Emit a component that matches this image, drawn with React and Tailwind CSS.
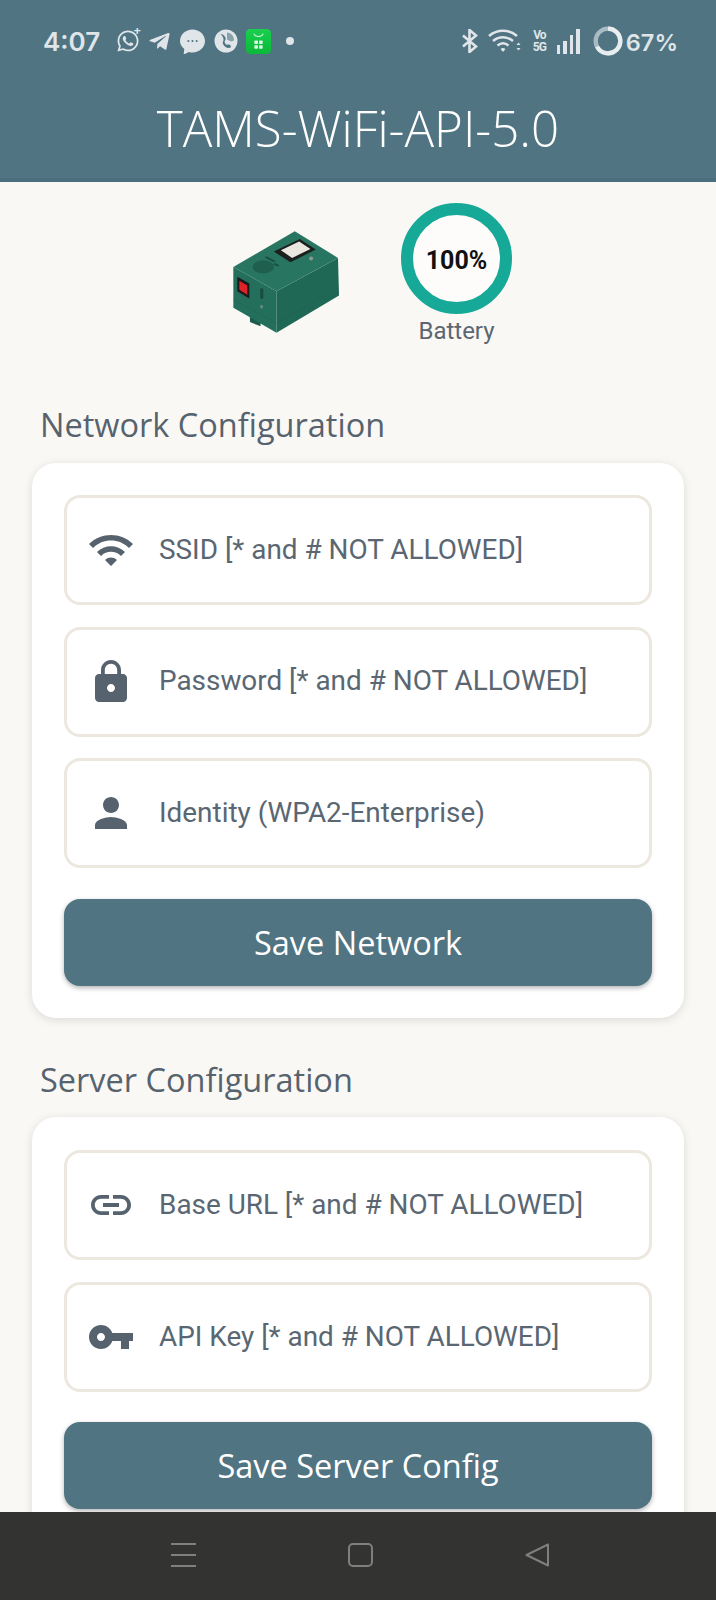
import React from 'react';
import { FaWhatsapp, FaTelegramPlane } from 'react-icons/fa';

const paths = {
  wifi: 'M1 9l2 2c4.97-4.97 13.03-4.97 18 0l2-2C16.93 2.93 7.08 2.93 1 9zm8 8l3 3 3-3c-1.65-1.66-4.34-1.66-6 0zm-4-4l2 2c2.76-2.76 7.24-2.76 10 0l2-2C15.14 9.14 8.87 9.14 5 13z',
  lock: 'M18 8h-1V6c0-2.76-2.24-5-5-5S7 3.24 7 6v2H6c-1.1 0-2 .9-2 2v10c0 1.1.9 2 2 2h12c1.1 0 2-.9 2-2V10c0-1.1-.9-2-2-2zm-6 9c-1.1 0-2-.9-2-2s.9-2 2-2 2 .9 2 2-.9 2-2 2zm3.1-9H8.9V6c0-1.71 1.39-3.1 3.1-3.1 1.71 0 3.1 1.39 3.1 3.1v2z',
  person: 'M12 12c2.21 0 4-1.79 4-4s-1.79-4-4-4-4 1.79-4 4 1.79 4 4 4zm0 2c-2.67 0-8 1.34-8 4v2h16v-2c0-2.66-5.33-4-8-4z',
  link: 'M3.9 12c0-1.71 1.39-3.1 3.1-3.1h4V7H7c-2.76 0-5 2.24-5 5s2.24 5 5 5h4v-1.9H7c-1.71 0-3.1-1.39-3.1-3.1zM8 13h8v-2H8v2zm9-6h-4v1.9h4c1.71 0 3.1 1.39 3.1 3.1s-1.39 3.1-3.1 3.1h-4V17h4c2.76 0 5-2.24 5-5s-2.24-5-5-5z',
  key: 'M12.65 10C11.83 7.67 9.61 6 7 6c-3.31 0-6 2.69-6 6s2.69 6 6 6c2.61 0 4.83-1.67 5.65-4H17v4h4v-4h2v-4H12.65zM7 14c-1.1 0-2-.9-2-2s.9-2 2-2 2 .9 2 2-.9 2-2 2z',
};

function Field({ icon, label }) {
  return (
    <div className="flex h-[110px] items-center gap-6 rounded-[16px] border-[3px] border-[#ece8df] bg-white pl-5">
      <svg viewBox="0 0 24 24" className="h-12 w-12 shrink-0 fill-[#56636e]">
        <path d={paths[icon]} />
      </svg>
      <span className="pb-[1px] font-['Roboto',sans-serif] text-[27.900px] font-[450] text-[#5a6772] whitespace-nowrap">{label}</span>
    </div>
  );
}

function SaveButton({ children }) {
  return (
    <button className="h-[87px] w-full rounded-[16px] bg-[#507482] pt-[2px] font-['Open_Sans',sans-serif] text-[32.5px] text-white shadow-[0_2px_5px_rgba(0,0,0,0.3)]">
      {children}
    </button>
  );
}

function StatusBar() {
  return (
    <div className="flex h-[82px] items-center justify-between pl-[43px] pr-[38px] text-[#dfe5e8]">
      <div className="flex items-center">
        <span className="w-[73px] font-['Inter',sans-serif] text-[26px] font-semibold">4:07</span>
        <div className="relative mr-[9px] h-[24px] w-[23px]">
          <FaWhatsapp className="h-[24px] w-[24px]" />
          <span className="absolute -right-[2px] -top-[5px] text-[13px] font-bold leading-[13px]">+</span>
        </div>
        <FaTelegramPlane className="mr-[9px] h-[23px] w-[23px]" />
        <svg viewBox="0 0 24 24" className="mr-[9px] h-[25px] w-[25px]">
          <path d="M12 0.5c6.6 0 12 4.9 12 11s-5.4 11-12 11c-1.2 0-2.300-.2-3.400-.5L3.500 24.500l.6-5.300C1.600 17 0 14.500 0 11.500 0 5.400 5.400.5 12 .5z" fill="#dfe5e8" />
          <circle cx="8" cy="11.500" r="1" fill="#507482" />
          <circle cx="12" cy="11.500" r="1" fill="#507482" />
          <circle cx="16" cy="11.500" r="1" fill="#507482" />
        </svg>
        <svg viewBox="0 0 24 24" className="mr-[8px] h-[24px] w-[24px]">
          <circle cx="12" cy="12" r="11.500" fill="#dfe5e8" />
          <path d="M6 6c2-1 3 2 3.500 4S8 13 9 15s3 4 6 4 2-3 0-3.500-2 1-3 0-2-3-1-4 1-3-1-5S7 5 6 6z" fill="#507482" />
          <path d="M13 3.500c4 .5 7 3.500 7 8l-3 1-4-2z" fill="#507482" opacity=".6" />
        </svg>
        <svg viewBox="0 0 24 24" className="mr-[15px] h-[25px] w-[25px]">
          <defs>
            <linearGradient id="market" x1="0" y1="0" x2="0" y2="1">
              <stop offset="0" stopColor="#19d04e" />
              <stop offset="1" stopColor="#0bb83a" />
            </linearGradient>
          </defs>
          <rect width="24" height="24" rx="4" fill="url(#market)" />
          <path d="M7.500 4.500c1 3.500 8 3.500 9 0" fill="none" stroke="#dff5e4" strokeWidth="1" />
          <rect x="8" y="11" width="3.500" height="3.500" rx=".8" fill="#dff5e4" />
          <rect x="12.500" y="11" width="3.500" height="3.500" rx=".8" fill="#dff5e4" />
          <rect x="8" y="15.500" width="3.500" height="3.500" rx=".8" fill="#dff5e4" />
          <rect x="12.500" y="15.500" width="3.500" height="3.500" rx=".8" fill="#dff5e4" />
        </svg>
        <span className="h-[8px] w-[8px] rounded-full bg-[#dfe5e8]" />
      </div>
      <div className="flex items-center">
        <svg viewBox="0 0 17 24" className="mr-[10px] h-[24px] w-[17px] fill-none stroke-[#dfe5e8]" strokeWidth="2.600">
          <path d="M2 6.500L15 17.500 8.500 23V1L15 6.500 2 17.500" />
        </svg>
        <svg viewBox="0 0 34 24" className="mr-[10px] h-[26px] w-[34px] fill-none stroke-[#dfe5e8]">
          <path d="M1 7c8-7 20-7 28 0" strokeWidth="2.400" />
          <path d="M5 12c6-5 14-5 20 0" strokeWidth="2.400" />
          <path d="M9.500 16.500c3.500-3 7.500-3 11 0" strokeWidth="2.400" />
          <path d="M12.500 20c1.500-1.300 3.500-1.300 5 0L15 23z" fill="#dfe5e8" stroke="none" />
          <path d="M28.500 16h4l-2-2.500zM28.500 19h4l-2 2.500z" fill="#dfe5e8" stroke="none" />
        </svg>
        <div className="mr-[10px] flex w-[15px] flex-col items-center font-['Roboto',sans-serif] text-[12px] font-bold leading-[12px] tracking-[-1px]">
          <span>Vo</span>
          <span>5G</span>
        </div>
        <div className="mr-[13px] flex h-[25px] items-end gap-[3px]">
          <span className="h-[9px] w-[3.500px] bg-[#dfe5e8]" />
          <span className="h-[13px] w-[3.500px] bg-[#dfe5e8]" />
          <span className="h-[19px] w-[3.500px] bg-[#dfe5e8]" />
          <span className="h-[25px] w-[3.500px] bg-[#dfe5e8]" />
        </div>
        <svg viewBox="0 0 28 28" className="mr-[3px] h-[30px] w-[30px] -rotate-90 fill-none">
          <circle cx="14" cy="14" r="11.500" stroke="#a9bcc4" strokeWidth="4" />
          <circle cx="14" cy="14" r="11.500" stroke="#e8edef" strokeWidth="4" strokeDasharray="48.400 72.300" />
        </svg>
        <span className="mt-[3px] font-['Inter',sans-serif] text-[23.5px] font-semibold">67%</span>
      </div>
    </div>
  );
}

function Device() {
  return (
    <svg viewBox="90 115 340 325" className="h-[108px] w-[113px] shrink-0">
      <path d="M150 378v20l32 13v-20z" fill="#1c5a4a" />
      <path d="M100 232l130 73v125L100 355z" fill="#236f5b" />
      <path d="M230 305l185-100 3 113-188 112z" fill="#206856" />
      <path d="M100 232L285 125l130 80-185 100z" fill="#287662" />
      <path d="M100 330l130 72M230 402l188-108" stroke="#1b5a4a" strokeWidth="1.500" fill="none" opacity=".6" />
      <ellipse cx="190" cy="232" rx="32" ry="20" fill="#1e5f4e" />
      <path d="M222 186l78-38 48 32-76 38z" fill="#1b1f1e" />
      <path d="M243 182l55-26 34 22-55 27z" fill="#e9e7e0" />
      <path d="M200 200l28 14-6 4-28-14zM225 220l14 7-6 4-14-7z" fill="#1c4f42" />
      <circle cx="334" cy="207" r="6" fill="#8a9a90" />
      <path d="M112 262l36 20v45l-36-22z" fill="#1a1a1a" />
      <path d="M118 274l24 14v28l-24-15z" fill="#e0222a" />
      <rect x="181" y="296" width="9" height="32" rx="3" fill="#1c4a3e" />
      <circle cx="185" cy="352" r="5" fill="#5f8a7c" />
    </svg>
  );
}

export default function App() {
  return (
    <div className="flex h-[1600px] w-[716px] flex-col overflow-hidden bg-[#faf8f5]">
      <header className="h-[182px] shrink-0 border-b-[4px] border-[#4b6e7c] bg-[#507482]">
        <StatusBar />
        <h1 className="pt-[14px] text-center font-['Open_Sans',sans-serif] text-[49.300px] font-light leading-[64px] text-white">TAMS-WiFi-API-5.0</h1>
      </header>

      <main className="min-h-0 flex-1 overflow-hidden px-[32px] pt-[21px]">
        <div className="flex h-[162px] items-start pl-[198px]">
          <div className="mt-[25px]"><Device /></div>
          <div className="ml-[58px] flex flex-col items-center">
            <div className="flex h-[111px] w-[111px] items-center justify-center rounded-full border-[12px] border-[#17a998] bg-[#fdfcfa] pt-[4px] font-['Roboto',sans-serif] text-[25px] font-bold text-[#111]">
              100%
            </div>
            <span className="-mt-[1px] font-['Roboto',sans-serif] text-[24px] font-[450] text-[#5a6772]">Battery</span>
          </div>
        </div>

        <h2 className="mt-[40px] mb-[18px] pl-[8px] font-['Open_Sans',sans-serif] text-[32.500px] leading-[40px] text-[#56636e]">Network Configuration</h2>
        <section className="rounded-[24px] bg-white p-[32px] shadow-[0_2px_10px_rgba(0,0,0,0.12)]">
          <div className="flex flex-col gap-[21.5px]">
            <Field icon="wifi" label="SSID [* and # NOT ALLOWED]" />
            <Field icon="lock" label="Password [* and # NOT ALLOWED]" />
            <Field icon="person" label="Identity (WPA2-Enterprise)" />
          </div>
          <div className="mt-[31px]">
            <SaveButton>Save Network</SaveButton>
          </div>
        </section>

        <h2 className="mt-[42px] mb-[17px] pl-[8px] font-['Open_Sans',sans-serif] text-[32.500px] leading-[40px] text-[#56636e]">Server Configuration</h2>
        <section className="rounded-[24px] bg-white p-[32px] pt-[33px] shadow-[0_2px_10px_rgba(0,0,0,0.12)]">
          <div className="flex flex-col gap-[22px]">
            <Field icon="link" label="Base URL [* and # NOT ALLOWED]" />
            <Field icon="key" label="API Key [* and # NOT ALLOWED]" />
          </div>
          <div className="mt-[30px]">
            <SaveButton>Save Server Config</SaveButton>
          </div>
        </section>
      </main>

      <nav className="flex h-[88px] shrink-0 items-center justify-center gap-[152px] bg-[#333331] pl-1 pb-[2px]">
        <svg viewBox="0 0 25 24" className="h-[24px] w-[25px] stroke-[#7f7f7d]" strokeWidth="2">
          <path d="M0 1h25M0 12h25M0 23h25" />
        </svg>
        <svg viewBox="0 0 25 24" className="h-[24px] w-[25px] fill-none stroke-[#7f7f7d]" strokeWidth="2">
          <rect x="1" y="1" width="23" height="22" rx="4" />
        </svg>
        <svg viewBox="0 0 25 24" className="h-[24px] w-[25px] fill-none stroke-[#7f7f7d]" strokeWidth="2" strokeLinejoin="round">
          <path d="M23 1.500v21L1.500 12z" />
        </svg>
      </nav>
    </div>
  );
}
